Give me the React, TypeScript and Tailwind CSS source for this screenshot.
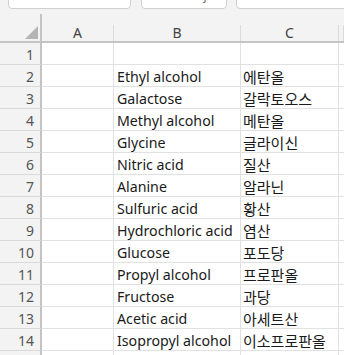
const ROWS: [string, string][] = [
  ["", ""],
  ["Ethyl alcohol", "에탄올"],
  ["Galactose", "갈락토오스"],
  ["Methyl alcohol", "메탄올"],
  ["Glycine", "글라이신"],
  ["Nitric acid", "질산"],
  ["Alanine", "알라닌"],
  ["Sulfuric acid", "황산"],
  ["Hydrochloric acid", "염산"],
  ["Glucose", "포도당"],
  ["Propyl alcohol", "프로판올"],
  ["Fructose", "과당"],
  ["Acetic acid", "아세트산"],
  ["Isopropyl alcohol", "이소프로판올"],
  ["", ""],
];

const COLS = "grid grid-cols-[42px_72px_127px_98px_1fr]";

export default function App() {
  return (
    <div
      className="h-[355px] w-[344px] overflow-hidden bg-white text-[#1a1a1a]"
      style={{ fontFamily: '"Noto Sans", "Noto Sans CJK KR", sans-serif' }}
    >
      {/* formula bar, scrolled mostly off the top */}
      <div className="relative h-[14px] bg-[#f3f3f3]">
        <div className="absolute left-[8px] top-[-19px] flex h-[28px] w-[123px] items-end justify-between rounded-[4px] border border-[#d0d0d0] bg-white px-[8px] pb-[7px] text-[13px] leading-none">
          <span>C15</span>
          <span className="text-[9px]">▾</span>
        </div>
        <div className="absolute left-[141px] top-[-19px] flex h-[28px] w-[86px] items-end justify-around rounded-[4px] border border-[#d0d0d0] bg-white px-[4px] pb-[6px] text-[12px] leading-none text-[#b0b0b0]">
          <span>✕</span>
          <span>✓</span>
          <span className="italic text-[#666]">fx</span>
        </div>
        <div className="absolute left-[236px] top-[-19px] h-[28px] w-[120px] rounded-[4px] border border-[#d0d0d0] bg-white" />
      </div>

      {/* column headers */}
      <div className={`${COLS} h-[29px] border-b-2 border-[#c4c4c4] bg-[#f3f3f3] text-[14px] text-[#444]`}>
        <div className="relative border-r-2 border-[#c4c4c4]">
          <svg className="absolute bottom-[2px] right-[2px]" width="13" height="13" viewBox="0 0 13 13">
            <polygon points="13,0 13,13 0,13" fill="#b4b4b4" />
          </svg>
        </div>
        {["A", "B", "C", ""].map((c, i) => (
          <div
            key={i}
            className="mt-[11px] flex items-center justify-center border-r border-[#dadada] leading-none"
          >
            {c}
          </div>
        ))}
      </div>

      {/* grid body */}
      {ROWS.map(([b, c], i) => (
        <div key={i} className={`${COLS} h-[22px] leading-none`}>
          <div className="flex items-center justify-end border-r-2 border-b border-r-[#c4c4c4] border-b-[#dadada] bg-[#f3f3f3] pr-[6px] pt-[2px] text-[14px] text-[#555]">
            {i + 1}
          </div>
          <div className="border-r border-b border-[#e1e1e1]" />
          <div className="flex items-center overflow-hidden whitespace-nowrap border-r border-b border-[#e1e1e1] pl-[3px] pt-[3px] text-[14.2px]">
            {b}
          </div>
          <div className="flex items-center overflow-hidden whitespace-nowrap border-r border-b border-[#e1e1e1] pl-[2px] pt-[3px] text-[15px]">
            {c}
          </div>
          <div className="border-b border-[#e1e1e1]" />
        </div>
      ))}
    </div>
  );
}
